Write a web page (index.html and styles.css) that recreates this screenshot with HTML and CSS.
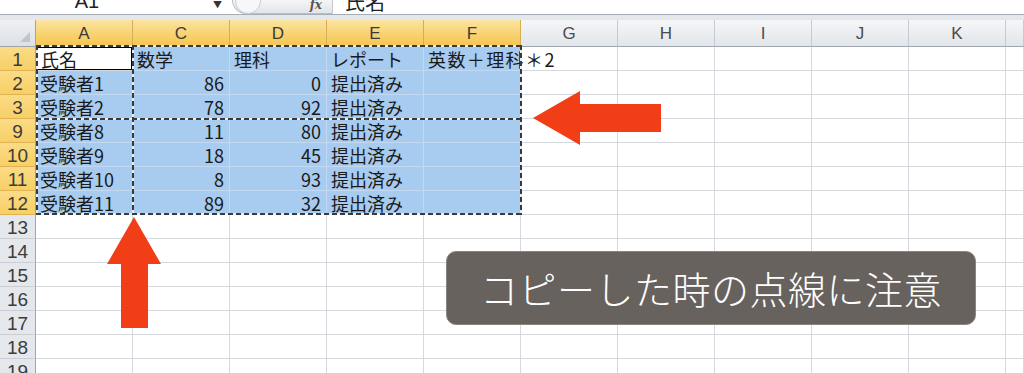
FILE: index.html
```html
<!DOCTYPE html>
<html lang="ja">
<head>
<meta charset="utf-8">
<title>Excel copy marquee</title>
<link rel="stylesheet" href="styles.css">
</head>
<body>
<div class="app">
  <div class="formula-bar">
    <div class="name-box"><span class="name-text">A1</span></div>
    <div class="name-drop">&#9660;</div>
    <div class="fx-pill"><span class="pill-btn"></span><span class="fx">fx</span></div>
    <div class="formula-text">氏名</div>
  </div>
  <div class="ribbon-gap"></div>
  <div class="sheet">
    <div class="corner"><span class="corner-tri"></span></div>
    <div class="ch hl">A</div><div class="ch hl">C</div><div class="ch hl">D</div><div class="ch hl">E</div><div class="ch hl">F</div>
    <div class="ch">G</div><div class="ch">H</div><div class="ch">I</div><div class="ch">J</div><div class="ch">K</div><div class="ch"></div>

    <div class="rh hl">1</div>
    <div class="c active">氏名</div><div class="c sel">数学</div><div class="c sel">理科</div><div class="c sel">レポート</div><div class="c sel over">英数＋理科＊2</div>
    <div class="c"></div><div class="c"></div><div class="c"></div><div class="c"></div><div class="c"></div><div class="c"></div>

    <div class="rh hl">2</div>
    <div class="c sel">受験者1</div><div class="c sel num">86</div><div class="c sel num">0</div><div class="c sel">提出済み</div><div class="c sel"></div>
    <div class="c"></div><div class="c"></div><div class="c"></div><div class="c"></div><div class="c"></div><div class="c"></div>

    <div class="rh hl">3</div>
    <div class="c sel">受験者2</div><div class="c sel num">78</div><div class="c sel num">92</div><div class="c sel">提出済み</div><div class="c sel"></div>
    <div class="c"></div><div class="c"></div><div class="c"></div><div class="c"></div><div class="c"></div><div class="c"></div>

    <div class="rh hl">9</div>
    <div class="c sel">受験者8</div><div class="c sel num">11</div><div class="c sel num">80</div><div class="c sel">提出済み</div><div class="c sel"></div>
    <div class="c"></div><div class="c"></div><div class="c"></div><div class="c"></div><div class="c"></div><div class="c"></div>

    <div class="rh hl">10</div>
    <div class="c sel">受験者9</div><div class="c sel num">18</div><div class="c sel num">45</div><div class="c sel">提出済み</div><div class="c sel"></div>
    <div class="c"></div><div class="c"></div><div class="c"></div><div class="c"></div><div class="c"></div><div class="c"></div>

    <div class="rh hl">11</div>
    <div class="c sel">受験者10</div><div class="c sel num">8</div><div class="c sel num">93</div><div class="c sel">提出済み</div><div class="c sel"></div>
    <div class="c"></div><div class="c"></div><div class="c"></div><div class="c"></div><div class="c"></div><div class="c"></div>

    <div class="rh hl">12</div>
    <div class="c sel">受験者11</div><div class="c sel num">89</div><div class="c sel num">32</div><div class="c sel">提出済み</div><div class="c sel"></div>
    <div class="c"></div><div class="c"></div><div class="c"></div><div class="c"></div><div class="c"></div><div class="c"></div>

    <div class="rh">13</div>
    <div class="c"></div><div class="c"></div><div class="c"></div><div class="c"></div><div class="c"></div><div class="c"></div><div class="c"></div><div class="c"></div><div class="c"></div><div class="c"></div><div class="c"></div>
    <div class="rh">14</div>
    <div class="c"></div><div class="c"></div><div class="c"></div><div class="c"></div><div class="c"></div><div class="c"></div><div class="c"></div><div class="c"></div><div class="c"></div><div class="c"></div><div class="c"></div>
    <div class="rh">15</div>
    <div class="c"></div><div class="c"></div><div class="c"></div><div class="c"></div><div class="c"></div><div class="c"></div><div class="c"></div><div class="c"></div><div class="c"></div><div class="c"></div><div class="c"></div>
    <div class="rh">16</div>
    <div class="c"></div><div class="c"></div><div class="c"></div><div class="c"></div><div class="c"></div><div class="c"></div><div class="c"></div><div class="c"></div><div class="c"></div><div class="c"></div><div class="c"></div>
    <div class="rh">17</div>
    <div class="c"></div><div class="c"></div><div class="c"></div><div class="c"></div><div class="c"></div><div class="c"></div><div class="c"></div><div class="c"></div><div class="c"></div><div class="c"></div><div class="c"></div>
    <div class="rh">18</div>
    <div class="c"></div><div class="c"></div><div class="c"></div><div class="c"></div><div class="c"></div><div class="c"></div><div class="c"></div><div class="c"></div><div class="c"></div><div class="c"></div><div class="c"></div>
    <div class="rh">19</div>
    <div class="c"></div><div class="c"></div><div class="c"></div><div class="c"></div><div class="c"></div><div class="c"></div><div class="c"></div><div class="c"></div><div class="c"></div><div class="c"></div><div class="c"></div>
  </div>

  <div class="ants ants-h ants-top"></div>
  <div class="ants ants-h ants-mid"></div>
  <div class="ants ants-h ants-bottom"></div>
  <div class="ants ants-v ants-left"></div>
  <div class="ants ants-v ants-split"></div>
  <div class="ants ants-v ants-right"></div>

  <svg class="arrows" width="1024" height="373" viewBox="0 0 1024 373">
    <polygon fill="#f23e17" points="533,118 580,91 580,104 661,104 661,132 580,132 580,145"/>
    <polygon fill="#f23e17" points="134,217 161,264 148,264 148,328 121,328 121,264 107,264"/>
  </svg>

  <div class="callout">コピーした時の点線に注意</div>
</div>
</body>
</html>
```

FILE: styles.css
```css
html, body {
  margin: 0;
  padding: 0;
  background: #ffffff;
}
body {
  width: 1024px;
  height: 373px;
  overflow: hidden;
  font-family: "Noto Sans CJK JP", "Noto Sans", sans-serif;
}
.app {
  position: relative;
  width: 1024px;
  height: 373px;
  overflow: hidden;
}

/* formula bar */
.formula-bar {
  display: flex;
  height: 14px;
  background: #ffffff;
  border-bottom: 1px solid #a7adb5;
  overflow: hidden;
}
.name-box {
  width: 174px;
  text-align: center;
  overflow: hidden;
}
.name-text {
  display: block;
  margin-top: -11px;
  font-family: "Liberation Sans", sans-serif;
  font-size: 20px;
  line-height: 24px;
  color: #222;
}
.name-drop {
  width: 58px;
  font-size: 9px;
  line-height: 10px;
  color: #333;
  padding-left: 39px;
  box-sizing: border-box;
}
.fx-pill {
  position: relative;
  width: 101px;
  background: linear-gradient(#f4f5f7, #e2e5e9);
  border-left: 1px solid #b9bec5;
  border-bottom: 1px solid #b9bec5;
  border-right: 1px solid #c3c7cc;
  border-bottom-left-radius: 14px;
  box-sizing: border-box;
  display: flex;
  align-items: flex-start;
  justify-content: flex-end;
}
.pill-btn {
  position: absolute;
  left: 2px;
  top: -12px;
  width: 24px;
  height: 24px;
  border-radius: 50%;
  border: 1px solid #c9cdd2;
  background: #f6f7f8;
}
.fx {
  font-family: "DejaVu Serif", serif;
  font-style: italic;
  font-weight: bold;
  font-size: 12px;
  line-height: 10px;
  color: #555;
  margin-right: 10px;
}
.formula-text {
  padding-left: 12px;
  font-size: 20px;
  line-height: 20px;
  margin-top: -8px;
  color: #222;
}
.ribbon-gap {
  height: 5px;
  background: #e4e8ed;
}

/* sheet grid */
.sheet {
  display: grid;
  grid-template-columns: 36px repeat(10, 97px) 1fr;
  grid-template-rows: 27px;
  grid-auto-rows: 24px;
}
.corner {
  position: relative;
  background: linear-gradient(#eef0f3, #dde1e6);
  border-right: 1px solid #9ea5ae;
  border-bottom: 1px solid #9ea5ae;
  box-sizing: border-box;
}
.corner-tri {
  position: absolute;
  right: 5px;
  bottom: 4px;
  width: 0;
  height: 0;
  border-left: 10px solid transparent;
  border-bottom: 10px solid #c1c6cc;
}
.ch {
  box-sizing: border-box;
  background: linear-gradient(#f5f6f8, #e2e5e9);
  border-right: 1px solid #c6cad0;
  border-bottom: 1px solid #9ea5ae;
  font-family: "Liberation Sans", sans-serif;
  font-size: 17px;
  line-height: 27px;
  text-align: center;
  color: #4a4a4a;
}
.ch.hl {
  background: linear-gradient(#fbe5a2, #f8d270 55%, #f5c651);
  border-right: 1px solid #d8ae55;
  border-bottom: 1px solid #d49a2c;
  color: #3a3a3a;
}
.rh {
  box-sizing: border-box;
  background: #e4e7eb;
  border-right: 1px solid #9ea5ae;
  border-bottom: 1px solid #cbcfd4;
  font-family: "Liberation Sans", sans-serif;
  font-size: 19px;
  line-height: 25px;
  text-align: center;
  color: #3c3c3c;
}
.rh.hl {
  background: linear-gradient(#fbdc86, #f7cf64);
  border-right: 1px solid #d49a2c;
  border-bottom: 1px solid #e2b356;
}
.c {
  box-sizing: border-box;
  border-right: 1px solid #d5d8dc;
  border-bottom: 1px solid #d5d8dc;
  font-size: 18px;
  line-height: 25px;
  padding: 0 5px 0 4px;
  color: #1a1a1a;
  white-space: nowrap;
}
.c.sel {
  background: #a8cbf0;
  border-right-color: #c3d9f2;
  border-bottom-color: #c3d9f2;
}
.c.num {
  text-align: right;
}
.c.active {
  background: #ffffff;
  box-shadow: inset 0 0 0 1px #000;
  padding-left: 5px;
}
.c.over {
  overflow: visible;
  letter-spacing: 1.4px;
}

/* copy marquee (marching ants) */
.ants {
  position: absolute;
}
.ants-h {
  left: 36px;
  width: 486px;
  height: 2px;
  background: repeating-linear-gradient(90deg, #3a3a3a 0 5px, #e8eef5 5px 8px);
}
.ants-v {
  top: 45px;
  height: 170px;
  width: 2px;
  background: repeating-linear-gradient(180deg, #3a3a3a 0 5px, #e8eef5 5px 8px);
}
.ants-top { top: 45px; }
.ants-mid { top: 118px; }
.ants-bottom { top: 213px; }
.ants-left { left: 36px; }
.ants-split { left: 132px; }
.ants-right { left: 520px; }

.arrows {
  position: absolute;
  left: 0;
  top: 0;
}

.callout {
  position: absolute;
  left: 446px;
  top: 251px;
  width: 530px;
  height: 74px;
  box-sizing: border-box;
  background: #67625e;
  border: 1px solid #8b8682;
  border-radius: 10px;
  color: #ffffff;
  font-size: 38px;
  font-weight: 300;
  line-height: 72px;
  text-align: center;
  letter-spacing: 0.5px;
}
```
